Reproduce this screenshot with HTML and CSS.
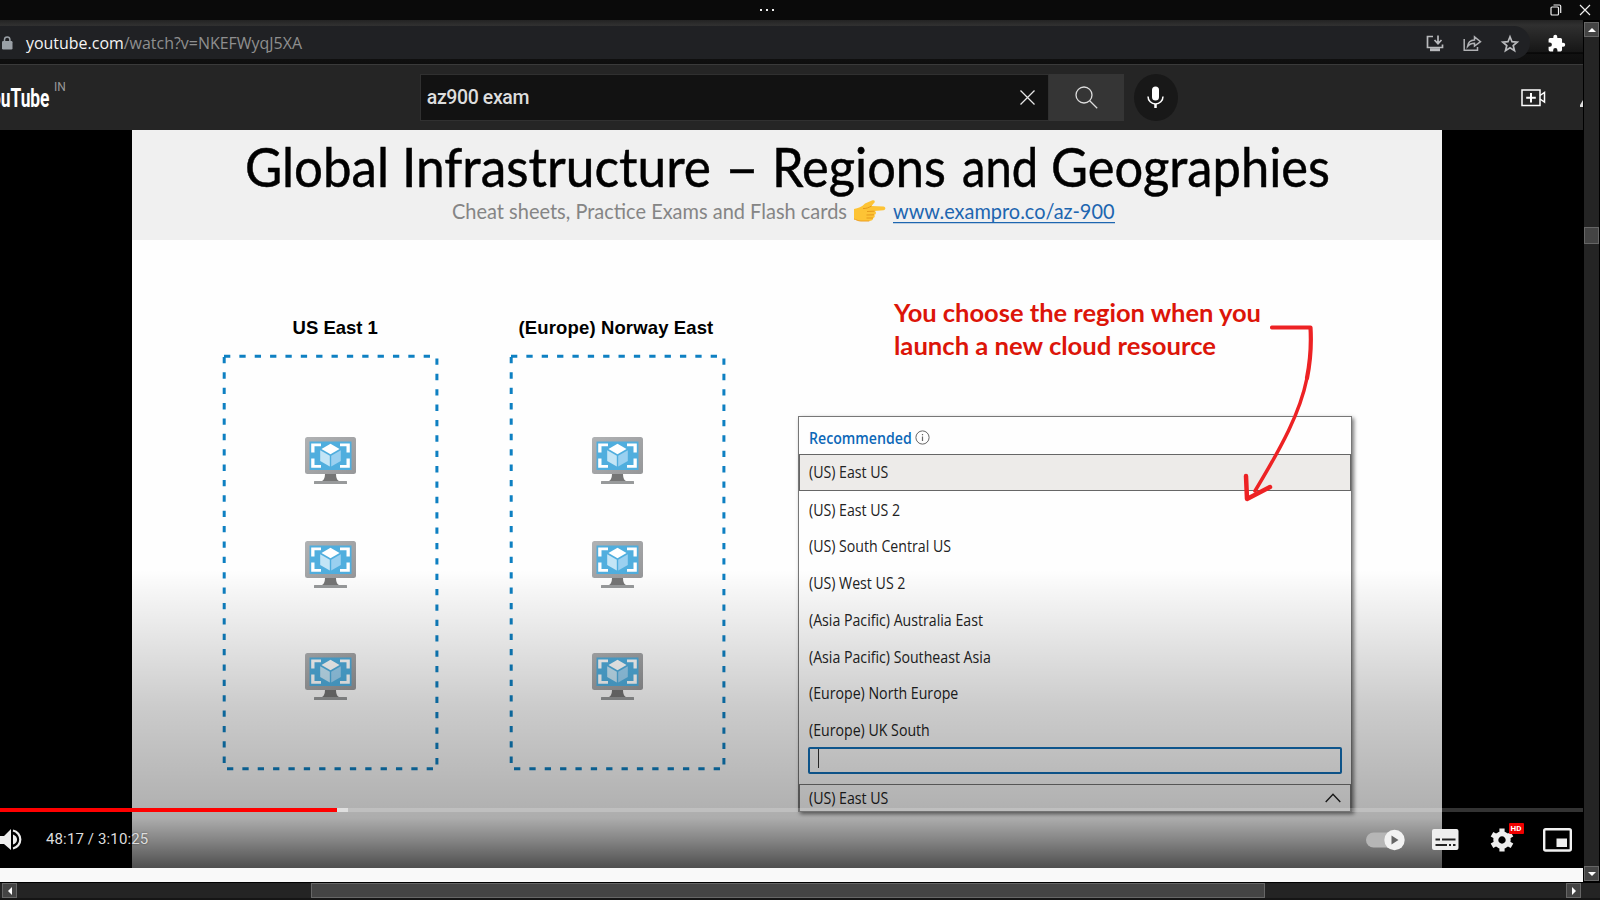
FILE: index.html
```html
<!DOCTYPE html>
<html lang="en">
<head>
<meta charset="utf-8">
<title>az900 exam</title>
<link rel="stylesheet" href="styles.css">
</head>
<body>
<svg class="defs" width="0" height="0">
  <defs>
    <linearGradient id="bezel" x1="0" y1="0" x2="1" y2="1">
      <stop offset="0" stop-color="#b0b2b4"/><stop offset="1" stop-color="#969799"/>
    </linearGradient>
    <symbol id="vm" viewBox="0 0 51 47">
      <path d="M20 36h11c0 5 1 8.200 5 8.500h-21c4-.3 5-3.500 5-8.500z" fill="#757575"/>
      <rect x="9" y="44" width="33" height="3" rx=".5" fill="#989a9b"/>
      <rect x="0" y="0" width="51" height="37" rx="2.500" fill="url(#bezel)"/>
      <rect x="4.500" y="4.500" width="42" height="28.500" fill="#50aede"/>
      <path d="M6.200 15.500V6.500H16v2.700H9.500v6.300zM44.800 15.500V6.500H35v2.700h6.500v6.300zM6.200 21.500v9.300H16v-2.700H9.500v-6.600zM44.800 21.500v9.300H35v-2.700h6.500v-6.600z" fill="#fff"/>
      <path d="M25.500 6.800l9 5.200-9 5.200-9-5.200z" fill="#fff"/>
      <path d="M15.200 13.200l9.600 5.500v10.800l-9.600-5.600z" fill="#c3e5f6"/>
      <path d="M35.800 13.200l-9.600 5.500v10.800l9.600-5.600z" fill="#9ad0f0"/>
    </symbol>
    <symbol id="frame" viewBox="0 0 217 417">
      <g stroke="#0e80c2" stroke-width="3" fill="none">
        <path d="M2 2.300H212" stroke-dasharray="6.300 9.060"/>
        <path d="M2.200 2V409" stroke-dasharray="6.300 9.070" stroke-dashoffset="-1"/>
        <path d="M214.900 4.500V412" stroke-dasharray="6.300 9.070"/>
        <path d="M5 414.700H213" stroke-dasharray="6.300 9.060"/>
      </g>
    </symbol>
  </defs>
</svg>

<div class="titlebar">
  <svg class="dots" width="16" height="4"><path d="M0 1h2v2H0zM6 1h2v2H6zM12 1h2v2h-2z" fill="#eee"/></svg>
  <svg class="restore" width="12" height="12" fill="none" stroke="#eee" stroke-width="1.200"><rect x="1" y="3" width="7.500" height="8" rx="1"/><path d="M3.500 1h6q1.200 0 1.200 1.200V9"/></svg>
  <svg class="close" width="12" height="12" stroke="#eee" stroke-width="1.200"><path d="M1 1l10 10M11 1L1 11"/></svg>
</div>

<div class="window">
  <div class="page">
    <div class="addressbar">
      <div class="omnibox">
        <svg class="lock" width="11" height="14"><rect x="0" y="5" width="10.500" height="8.500" rx="1.200" fill="#9aa0a6"/><path d="M2.500 5.500V3.600a2.700 2.700 0 0 1 5.400 0v1.900" fill="none" stroke="#9aa0a6" stroke-width="1.500"/></svg>
        <svg class="url" width="280" height="26"><text x="0" y="19" textLength="276" lengthAdjust="spacingAndGlyphs"><tspan class="host">youtube.com</tspan>/watch?v=NKEFWyqJ5XA</text></svg>
        <div class="omni-icons">
          <svg width="18" height="17" fill="none" stroke="#b9babd" stroke-width="1.700"><path d="M7 1.500H1.500V12.500H16.500V9.500M12 .5V8M8.500 5l3.500 3.700L15.500 5"/><path d="M4 14.700h10" stroke-width="3"/></svg>
          <svg width="19" height="17" fill="none" stroke="#b0b1b4" stroke-width="1.500"><path d="M1.200 4v11.300H14.500V12"/><path d="M4.500 11.500c.5-4.500 3-6.300 7-6.500V1.800L17.500 6.700 11.500 11V8.300c-3 0-5 .7-7 3.200z"/></svg>
          <svg width="18" height="17" fill="none" stroke="#b9babd" stroke-width="1.700"><path d="M9 1.800l2 4.900 5.200.4-4 3.400 1.300 5.100L9 12.800l-4.500 2.800 1.300-5.100-4-3.400L7 6.700z"/></svg>
        </div>
      </div>
      <svg class="puzzle" width="19" height="19" viewBox="0 0 24 24" fill="#fff"><path d="M20.500 11H19V7a2 2 0 0 0-2-2h-4V3.500a2.500 2.500 0 0 0-5 0V5H4a2 2 0 0 0-2 2v3.800h1.500a2.700 2.700 0 0 1 0 5.400H2V20a2 2 0 0 0 2 2h3.800v-1.500a2.700 2.700 0 0 1 5.400 0V22H17a2 2 0 0 0 2-2v-4h1.500a2.500 2.500 0 0 0 0-5z"/></svg>
    </div>

    <div class="masthead">
      <svg class="logo" width="50" height="26"><text x="-9" y="21.300" textLength="58.500" lengthAdjust="spacingAndGlyphs">ouTube</text></svg>
      <span class="country">IN</span>
      <div class="search">
        <div class="search-input"><span>az900 exam</span>
          <svg width="15" height="15" stroke="#e6e6e6" stroke-width="1.300"><path d="M.5 .5l14 14M14.500 .5l-14 14"/></svg>
        </div>
        <div class="search-button"><svg width="23" height="23" fill="none" stroke="#ddd" stroke-width="1.300"><circle cx="9" cy="9" r="8"/><path d="M14.700 14.700l7.500 7.500"/></svg></div>
      </div>
      <div class="mic"><svg width="17" height="23" fill="none" stroke="#fff"><rect x="5" y=".5" width="7" height="14" rx="3.500" fill="#fff" stroke="none"/><path d="M1 10.500a7.500 7.500 0 0 0 15 0" stroke-width="1.500"/><path d="M8.500 18v4" stroke-width="2.500"/></svg></div>
      <svg class="create" width="25" height="18" fill="none" stroke="#fff" stroke-width="1.500"><rect x="1" y="1" width="18" height="15.500"/><path d="M19 6.500l4.500-3v9.500L19 10"/><path d="M10 4v9.500M5.200 8.700h9.600" stroke-width="2"/></svg>
      <svg class="bell" width="3" height="7"><path d="M3 0v7H0V5z" fill="#ddd"/></svg>
    </div>

    <div class="video">
      <div class="slide">
        <div class="slide-head">
          <svg class="slide-title" width="1100" height="66">
            <text x="0" y="50" textLength="144" lengthAdjust="spacingAndGlyphs">Global</text>
            <text x="157" y="50" textLength="309" lengthAdjust="spacingAndGlyphs">Infrastructure</text>
            <text x="480" y="50" textLength="34" lengthAdjust="spacingAndGlyphs">–</text>
            <text x="527" y="50" textLength="174" lengthAdjust="spacingAndGlyphs">Regions</text>
            <text x="717" y="50" textLength="76" lengthAdjust="spacingAndGlyphs">and</text>
            <text x="806" y="50" textLength="279" lengthAdjust="spacingAndGlyphs">Geographies</text>
          </svg>
          <div class="slide-sub">
            <svg width="396" height="28"><text class="sub" x="0" y="20" textLength="395" lengthAdjust="spacingAndGlyphs">Cheat sheets, Practice Exams and Flash cards</text></svg>
            <svg class="hand" width="32" height="22"><path d="M0 9C4 8 8 7 11 3.500L18.500 .3c2.500-.6 3 1.700 1.300 3L17.500 6l12 .5c2.500.3 2.500 3.500 0 3.800l-9 .7c2 .5 2 3.500-.2 3.800 1 1 .5 2.900-1 3.200 0 2-2 3-4 3H7C4 21 2 19.500 0 19z" fill="#fdc335"/><path d="M13 11.500l7.500-.3M12.500 15l7.500-.2M12.500 18h6.500M9 8.500c3 .3 6-1 8.500-2.500" stroke="#e69a1c" fill="none"/><path d="M0 19c2 .5 4 2 7 2h8.300" stroke="#ee9f22" fill="none"/></svg>
            <svg width="224" height="28"><text class="link" x="0" y="20" textLength="221.500" lengthAdjust="spacingAndGlyphs">www.exampro.co/az-900</text><path d="M0 23.700h222" stroke="#1d66b0" stroke-width="1.300"/></svg>
          </div>
        </div>
        <div class="slide-body">
          <div class="region">
            <svg class="frame" width="217" height="417"><use href="#frame"/></svg>
            <div class="region-name">US East 1</div>
            <svg class="vm" width="51" height="47"><use href="#vm"/></svg>
            <svg class="vm" width="51" height="47"><use href="#vm"/></svg>
            <svg class="vm" width="51" height="47"><use href="#vm"/></svg>
          </div>
          <div class="region">
            <svg class="frame" width="217" height="417"><use href="#frame"/></svg>
            <div class="region-name wide">(Europe) Norway East</div>
            <svg class="vm" width="51" height="47"><use href="#vm"/></svg>
            <svg class="vm" width="51" height="47"><use href="#vm"/></svg>
            <svg class="vm" width="51" height="47"><use href="#vm"/></svg>
          </div>
          <div class="choose">
            <svg class="callout" width="370" height="70"><text x="0" y="25.800" textLength="367" lengthAdjust="spacingAndGlyphs">You choose the region when you</text><text x="0" y="58.600" textLength="322" lengthAdjust="spacingAndGlyphs">launch a new cloud resource</text></svg>
            <div class="picker">
              <div class="opt rec"><span>Recommended</span><svg width="15" height="15" fill="none" stroke="#666"><circle cx="7.500" cy="7.500" r="6.600"/><path d="M7.500 6.500v4.500M7.500 4v1.300" stroke-width="1.200"/></svg></div>
              <div class="opt sel"><span>(US) East US</span></div>
              <div class="opt"><span>(US) East US 2</span></div>
              <div class="opt"><span>(US) South Central US</span></div>
              <div class="opt"><span>(US) West US 2</span></div>
              <div class="opt"><span>(Asia Pacific) Australia East</span></div>
              <div class="opt"><span>(Asia Pacific) Southeast Asia</span></div>
              <div class="opt"><span>(Europe) North Europe</span></div>
              <div class="opt"><span>(Europe) UK South</span></div>
              <div class="filter"><i></i></div>
              <div class="current"><span>(US) East US</span><svg width="16" height="10" fill="none" stroke="#222" stroke-width="1.400"><path d="M.7 9L8 1.200 15.300 9"/></svg></div>
            </div>
            <svg class="arrow" width="60" height="186" fill="none" stroke="#ed2224" stroke-linecap="round" stroke-linejoin="round"><path d="M30 9.500h38.500Q70 35 65 60" stroke-width="4.200"/><path d="M65 60C58 95 40 128 13 173" stroke-width="3.500"/><path d="M4 158l1 23 23-12" stroke-width="4.500"/></svg>
          </div>
        </div>
      </div>
      <div class="shade"></div>
      <div class="progress"><div class="played"></div><div class="loaded"></div></div>
      <div class="controls">
        <svg class="volume" width="24" height="22"><path d="M0 7h4l7-7v21l-7-6H0z" fill="#eee"/><path d="M13 5.500q4 1.500 4 5t-4 5z" fill="#eee"/><path d="M13 1.500a9.200 9.200 0 0 1 0 18" fill="none" stroke="#eee" stroke-width="2.200"/></svg>
        <span class="time">48:17 / 3:10:25</span>
        <svg class="autoplay" width="40" height="22"><rect x="0" y="3.500" width="34" height="15" rx="7.500" fill="#b6b6b6"/><circle cx="28.500" cy="11" r="10.200" fill="#f2f2f2"/><path d="M25.500 6.500v9l7-4.500z" fill="#666"/></svg>
        <svg class="cc" width="27" height="22"><rect x="0" y="0" width="26.500" height="21" rx="2" fill="#eee"/><path d="M3.500 10.500h4.500M10 10.500h13.500M3.500 16h11.500M17 16h2M21 16h2.500" stroke="#222" stroke-width="2"/></svg>
        <div class="gear"><svg width="24" height="24" viewBox="-12 -12 24 24"><circle r="6.200" fill="none" stroke="#eee" stroke-width="5"/><path d="M0-11.500V-7M0 7v4.500M-10-5.800l4 2.300M6 3.500l4 2.300M10-5.800L6-3.500M-6 3.500l-4 2.300" stroke="#eee" stroke-width="5.200"/></svg><b>HD</b></div>
        <svg class="pip" width="29" height="24"><rect x="1.200" y="1.200" width="26.600" height="21.300" rx="1.500" fill="none" stroke="#f1f1f1" stroke-width="2.400"/><rect x="13.500" y="10.500" width="10.500" height="8.500" fill="#eee"/></svg>
      </div>
    </div>
    <div class="below"></div>
  </div>
  <div class="vscroll">
    <div class="btn"><svg width="8" height="4"><path d="M4 0l4 4H0z" fill="#fff"/></svg></div>
    <div class="vthumb"></div>
    <div class="btn down"><svg width="8" height="4"><path d="M0 0h8L4 4z" fill="#fff"/></svg></div>
  </div>
</div>
<div class="hscroll">
  <div class="btn"><svg width="4" height="8"><path d="M4 0v8L0 4z" fill="#fff"/></svg></div>
  <div class="hthumb"></div>
  <div class="btn right"><svg width="4" height="8"><path d="M0 0l4 4-4 4z" fill="#fff"/></svg></div>
  <div class="corner"></div>
</div>
</body>
</html>
```
FILE: styles.css
```css
* { box-sizing: border-box; }
body { margin: 0; width: 1600px; height: 914px; overflow: hidden; background: #fff; font-family: Roboto, sans-serif; }
svg { display: block; flex: none; overflow: visible; }
.defs { position: absolute; }

.titlebar { height: 20px; background: #0a0a0a; display: flex; align-items: center; padding-right: 9px; }
.dots { margin-left: 760px; }
.restore { margin-left: auto; margin-right: 17px; }

.window { display: flex; height: 862px; background: #000; }
.page { width: 1583px; overflow: hidden; }

.addressbar { height: 44px; padding-top: 6px; display: flex; background: linear-gradient(#232323 0, #303030 5px, #161616 32px, #000 33px, #111 34px, #0e0e0e); }
.omnibox { width: 1530px; height: 33px; background: #202124; border-radius: 0 16px 16px 0; display: flex; align-items: center; }
.lock { margin: 1px 0 0 2px; }
.url { margin-left: 13px; }
.url text { font: 16.5px "Open Sans", sans-serif; fill: #8f8f8f; }
.url .host { fill: #f4f4f4; }
.omni-icons { margin-left: auto; margin-right: 11px; padding-top: 2px; display: flex; gap: 19px; }
.puzzle { margin: 8px 0 0 17px; }

.masthead { height: 66px; border-top: 1px solid #3a3a3a; background: #252525; display: flex; align-items: flex-start; padding-top: 9px; }
.logo { margin-top: 12px; }
.logo text { font: 700 26px Roboto, sans-serif; fill: #fff; }
.country { font-size: 12px; line-height: 12px; color: #999; margin: 6.500px 0 0 4px; width: 12px; }
.search { display: flex; margin-left: 354px; height: 47px; }
.search-input { width: 629px; border: 1px solid #303030; background: #121212; display: flex; align-items: center; justify-content: space-between; padding: 0 13px 0 6px; font-size: 19.500px; font-weight: 500; color: #ddd; letter-spacing: -.4px; }
.search-button { width: 75px; background: #353535; display: flex; align-items: center; justify-content: center; }
.mic { width: 47px; height: 47px; border-radius: 50%; background: #181818; margin-left: 10px; display: flex; align-items: center; justify-content: center; }
.create { margin: 15px 0 0 343px; }
.bell { margin: 26px 0 0 34px; }

.video { position: relative; height: 738px; background: #000; }
.slide { margin-left: 131.500px; width: 1310.500px; height: 738px; background: #fefefe; }
.slide-head { height: 110px; background: #f0f0f0; overflow: hidden; }
.slide-title { margin: 7px 0 0 113px; }
.slide-title text { font: 55px Lato, sans-serif; fill: #000; stroke: #000; stroke-width: .5px; }
.slide-sub { display: flex; margin: -4px 0 0 320px; }
.sub, .link { font: 20.500px Lato, sans-serif; fill: #858585; }
.link { fill: #1d66b0; }
.hand { margin: 1px 7px 0 6px; }

.slide-body { height: 628px; padding: 58px 0 0 90.500px; display: flex; }
.region { position: relative; width: 217px; margin-right: 69.500px; display: flex; flex-direction: column; align-items: center; }
.region-name { font: 700 18.500px/22px "Liberation Sans", sans-serif; margin: 19px -20px 97.500px -10.500px; white-space: nowrap; }
.wide { margin-left: -17px; margin-right: -15px; letter-spacing: .13px; }
.region .frame { position: absolute; left: 0; top: 56px; }
.vm + .vm { margin-top: 57.500px; }
.vm + .vm + .vm { margin-top: 64.500px; }

.choose { position: relative; width: 556px; margin-left: 1px; }
.callout { margin-left: 98px; margin-top: -2px; }
.callout text { font: 700 24.500px Lato, sans-serif; fill: #dc1509; }
.picker { margin-top: 50px; margin-left: 2px; width: 554px; height: 396px; border: 1.500px solid #777; box-shadow: 2px 2px 4px #777; background: #fefefe; font: 15.500px "Open Sans", sans-serif; color: #222; }
.opt { height: 36.750px; padding-left: 9.500px; display: flex; align-items: center; }
.opt span, .current span { transform: scaleX(.913); transform-origin: 0 50%; white-space: nowrap; }
.rec { height: 37px; color: #0d68b8; font-weight: 600; padding-top: 4px; }
.rec svg { margin-left: -6px; }
.sel { background: #edebe9; border: 1.500px solid #666; padding-left: 8.500px; }
.sel ~ .opt span { margin-top: 1px; }
.filter { margin: -1px 9px 0; height: 27px; border: 2.500px solid #1270b8; border-radius: 2px; }
.filter i { display: block; width: 1px; height: 19px; margin-left: 8px; background: #333; }
.current { margin-top: 10px; height: 28px; border: 1.500px solid #777; display: flex; align-items: center; justify-content: space-between; padding: 0 9px; }
.arrow { position: absolute; left: 446px; top: 20px; }

.shade { position: absolute; left: 0; right: 0; bottom: 0; height: 298px; background: linear-gradient(rgba(0,0,0,0), rgba(0,0,0,.03) 20px, rgba(0,0,0,.12) 83px, rgba(0,0,0,.2) 137px, rgba(0,0,0,.3) 236px, rgba(0,0,0,.32) 248px, rgba(0,0,0,.48) 270px, rgba(0,0,0,.69)); }
.progress { position: absolute; left: 0; right: 0; top: 678px; height: 4px; background: rgba(255,255,255,.2); display: flex; }
.played { width: 337px; background: #f00; }
.loaded { width: 11px; background: rgba(255,255,255,.5); }
.controls { position: absolute; left: 0; right: 0; top: 682px; height: 55px; display: flex; align-items: center; padding-right: 11px; }
.time { margin-left: 22px; margin-top: -1px; font-size: 15px; letter-spacing: .13px; color: #ddd; text-shadow: 0 0 2px rgba(0,0,0,.5); }
.autoplay { margin-left: auto; }
.cc { margin-left: 26px; }
.gear { position: relative; margin-left: 30.500px; }
.gear b { position: absolute; left: 19px; top: -5px; width: 15px; height: 11px; background: #e00; color: #fff; font: 700 8px/11px Roboto, sans-serif; text-align: center; border-radius: 1px; }
.pip { margin-left: 29.500px; }
.below { height: 14px; background: #f9f9f9; }

.vscroll { width: 17px; border: 1px solid #000; border-top-width: 2px; background: #242424; display: flex; flex-direction: column; }
.btn { width: 15px; height: 15px; background: #444; border: 1px solid #666; display: flex; align-items: center; justify-content: center; flex: none; }
.vthumb { margin-top: 190px; height: 17px; background: #444; border: 1px solid #666; }
.down { margin-top: auto; }
.hscroll { height: 18px; display: flex; background: #242424; border-top: 1px solid #000; border-bottom: 2px solid #151515; padding-left: 2px; }
.hthumb { width: 954px; height: 15px; background: #444; border: 1px solid #666; margin-left: 294px; }
.right { margin-left: auto; }
.corner { width: 17px; margin-left: 2px; background: #242424; }
```
